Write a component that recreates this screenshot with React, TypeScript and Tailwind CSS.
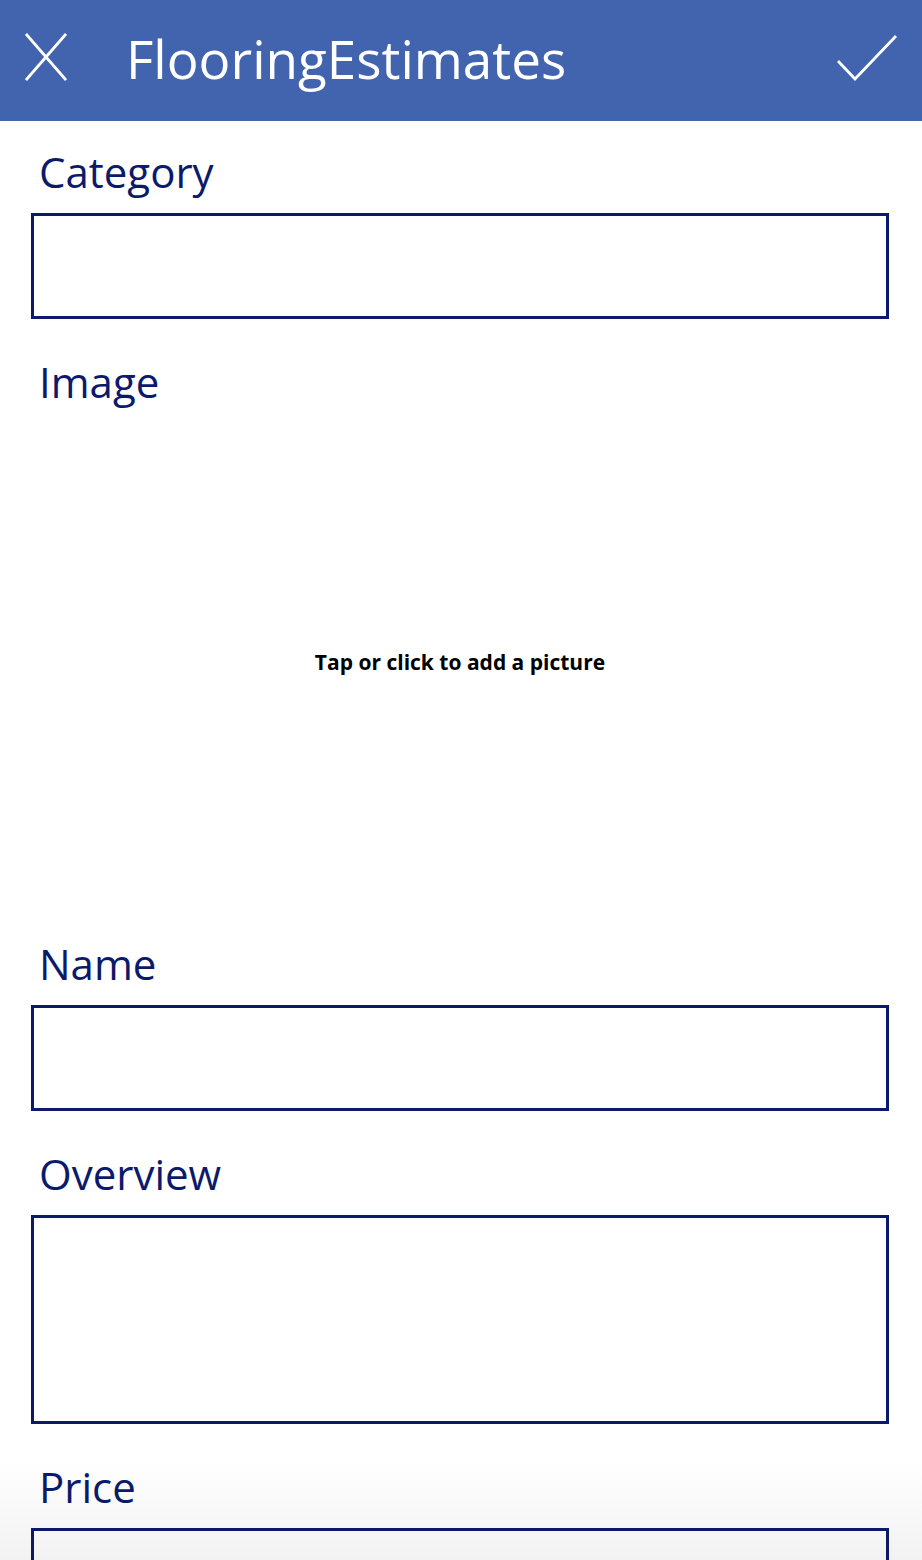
import React from 'react';

const font = { fontFamily: '"Open Sans", "Liberation Sans", sans-serif' };

function Field({ label, boxClass }: { label: string; boxClass: string }) {
  return (
    <div className="flex flex-col">
      <div className="h-[50px] pl-[8px] text-[42px] leading-[50px] text-[#0b1a6b]">{label}</div>
      <div className={`mt-[16px] border-[3px] border-[#0b1a6b] ${boxClass}`} />
    </div>
  );
}

export default function App() {
  return (
    <div className="relative h-[1560px] w-[922px] overflow-hidden bg-white" style={font}>
      {/* Top bar */}
      <header className="flex h-[121px] items-start bg-[#4264ae] text-white">
        <button className="ml-[25px] mt-[33px] flex h-[48px] w-[42px]">
          <svg width="42" height="48" viewBox="0 0 42 48" fill="none" stroke="white" strokeWidth="2.8">
            <line x1="1" y1="1" x2="41" y2="47" />
            <line x1="41" y1="1" x2="1" y2="47" />
          </svg>
        </button>
        <h1 className="ml-[59px] mt-[32px] text-[53px] leading-none">FlooringEstimates</h1>
        <button className="ml-auto mr-[25px] mt-[35px] flex h-[46px] w-[60px]">
          <svg width="60" height="46" viewBox="0 0 60 46" fill="none" stroke="white" strokeWidth="2.8">
            <polyline points="1,26 18,44 59,1" />
          </svg>
        </button>
      </header>

      {/* Form */}
      <main className="flex flex-col gap-[38px] pl-[31px] pr-[33px] pt-[26px]">
        <Field label="Category" boxClass="h-[106px]" />

        <div className="flex flex-col">
          <div className="h-[50px] pl-[8px] text-[42px] leading-[50px] text-[#0b1a6b]">Image</div>
          <div className="mt-[18px] flex h-[476px] items-center justify-center">
            <span className="text-[21px] font-bold text-black">Tap or click to add a picture</span>
          </div>
        </div>

        <Field label="Name" boxClass="h-[106px]" />
        <Field label="Overview" boxClass="h-[209px]" />
        <Field label="Price" boxClass="h-[106px]" />
      </main>

      {/* bottom fade */}
      <div className="pointer-events-none absolute bottom-0 left-0 h-[100px] w-full bg-gradient-to-b from-transparent to-[rgba(0,0,0,0.05)]" />
    </div>
  );
}
